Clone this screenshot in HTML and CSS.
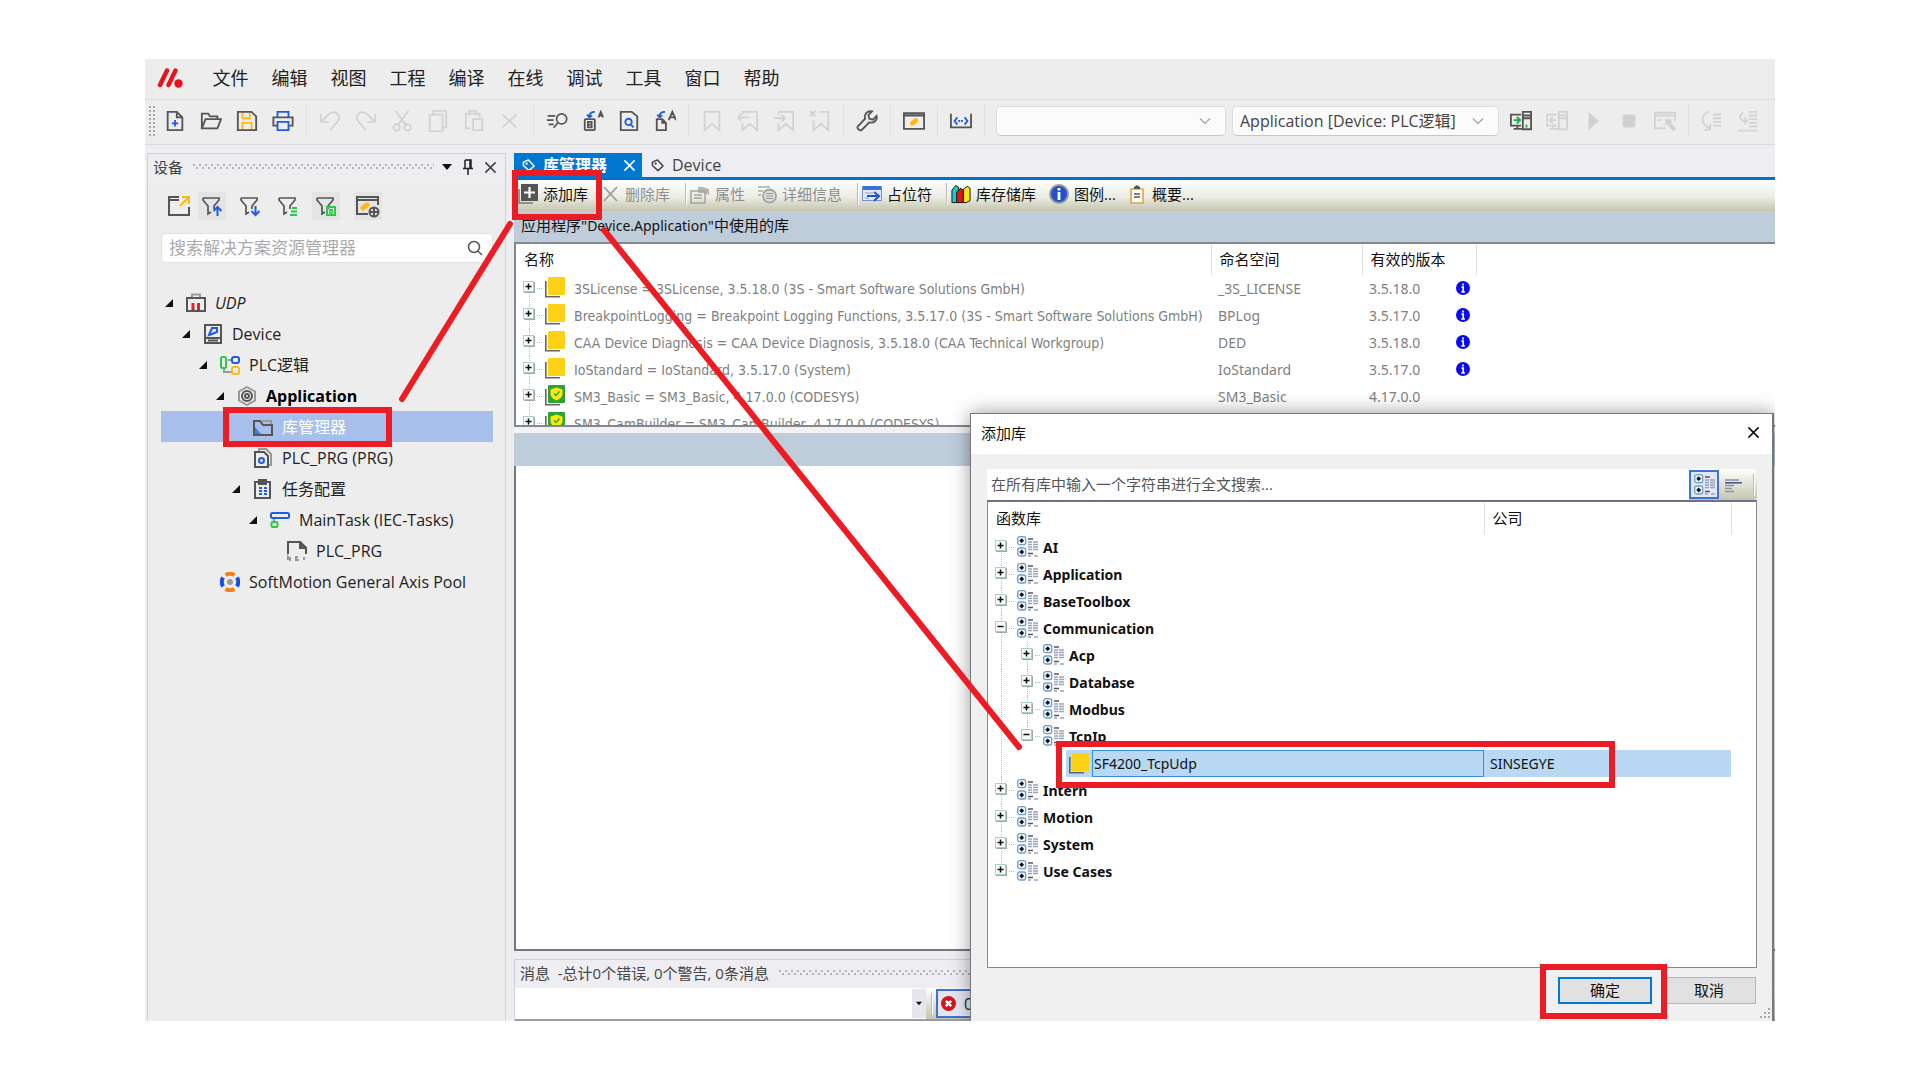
FILE: index.html
```html
<!DOCTYPE html>
<html lang="zh-CN">
<head>
<meta charset="utf-8">
<title>库管理器</title>
<link rel="stylesheet" href="styles.css">
</head>
<body>
<svg class="defs" aria-hidden="true">
  <symbol id="i-plus" viewBox="0 0 12 12"><rect x="1" y="1" width="11" height="11" fill="#9aa9a9"/><rect x=".5" y=".5" width="10" height="10" fill="#f6faf8" stroke="#a9cfcb"/><path d="M2.5 5.5h6M5.500 2.500v6" stroke="#111" stroke-width="1.500"/></symbol>
  <symbol id="i-minus" viewBox="0 0 12 12"><rect x="1" y="1" width="11" height="11" fill="#9aa9a9"/><rect x=".5" y=".5" width="10" height="10" fill="#f6faf8" stroke="#a9cfcb"/><path d="M2.500 5.500h6" stroke="#111" stroke-width="1.500"/></symbol>
  <symbol id="i-lib" viewBox="0 0 20 21"><path d="M.8 4v15.800H15" fill="none" stroke="#666" stroke-width="1.600"/><rect x="3" y="0" width="17" height="18" rx="1" fill="#fcd116"/></symbol>
  <symbol id="i-safe" viewBox="0 0 20 21"><path d="M.8 4v15.800H15" fill="none" stroke="#666" stroke-width="1.600"/><rect x="3" y="0" width="17" height="18" rx="1" fill="#2fa336"/><path d="M11.500 2.500l6 2v4.500c0 3-3 5.200-6 6.500-3-1.300-6-3.500-6-6.500V4.500z" fill="#fbe80f"/><path d="M9 8.500l2 2 3.500-4" fill="none" stroke="#2fa336" stroke-width="1.300"/></symbol>
  <symbol id="i-cat" viewBox="0 0 21 21"><g fill="#eef4fb" stroke="#6f9fd0" stroke-width="1.300"><rect x=".7" y=".7" width="8" height="8" rx="2"/><rect x=".7" y="12" width="8" height="8" rx="2"/></g><path d="M4.700 2.300l2.400 2.400-2.400 2.400-2.400-2.400zM4.700 13.600l2.400 2.400-2.400 2.400-2.400-2.400z" fill="#111"/><path d="M11 3h5M11 17.500h5" stroke="#555" stroke-width="1.300"/><path d="M11 6h4m1 0h5M11 8.500h4m1 0h5M11 11h4m1 0h5M11 13.500h4m1 0h5M17 20h4M11 20h3" stroke="#98a2bb" stroke-width="1.300"/></symbol>
  <symbol id="i-info" viewBox="0 0 14 14"><circle cx="7" cy="7" r="7" fill="#0a0af0"/><path d="M7 2.500v2M5.500 6.200H7.200v4.800M5.300 11h3.600" stroke="#fff" stroke-width="1.700" fill="none"/></symbol>
  <symbol id="i-tag" viewBox="0 0 14 14"><path d="M1.500 3.500L7 1l6 6.500L7.500 12.500 1.500 7z" fill="none" stroke="currentColor" stroke-width="1.600" stroke-linejoin="round"/><circle cx="5" cy="5" r="1.200" fill="currentColor"/></symbol>
  <symbol id="i-x" viewBox="0 0 14 14"><path d="M1.500 1.500l11 11M12.500 1.500l-11 11" stroke="currentColor" stroke-width="1.700"/></symbol>
  <symbol id="i-open" viewBox="0 0 10 10"><path d="M9 1v8H1z" fill="#111"/></symbol>
  <symbol id="i-down" viewBox="0 0 12 8"><path d="M1 1.500l5 5 5-5" fill="none" stroke="#aaa" stroke-width="1.400"/></symbol>
  <symbol id="i-caret" viewBox="0 0 10 6"><path d="M0 0h10L5 6z" fill="#111"/></symbol>
  <symbol id="i-funnel" viewBox="0 0 24 24"><path d="M3 4h16v2l-5 6v3M3 4v2l5 6v8l3-2" fill="none" stroke="#555" stroke-width="1.700"/></symbol>
</svg>
<div class="app">
  <nav class="menubar" aria-label="主菜单">
    <svg class="logo" viewBox="0 0 26 20"><path d="M3 17L10 2.500M11.500 17l7-14.500" stroke="#e8131c" stroke-width="4.400" stroke-linecap="round"/><circle cx="21.500" cy="15.500" r="4.200" fill="#e8131c"/></svg>
    <button>文件</button><button>编辑</button><button>视图</button><button>工程</button><button>编译</button><button>在线</button><button>调试</button><button>工具</button><button>窗口</button><button>帮助</button>
  </nav>
  <div class="toolbar" role="toolbar" aria-label="标准">
    <span class="grip"></span>
    <button aria-label="新建"><svg viewBox="0 0 24 24"><path d="M4 2h10l6 6v14H4zM14 2v6h6"/><path class="b" d="M12 11v7M8.500 14.500h7"/></svg></button>
    <button aria-label="打开"><svg viewBox="0 0 24 24"><path d="M2 20V4h7l2 3h8v3M2 20l4-10h17l-4 10z"/></svg></button>
    <button aria-label="保存"><svg viewBox="0 0 24 24"><path class="y" d="M7 2v7h8V2M7 22v-8h10v8"/><path d="M2 2h15l5 5v15H2z"/></svg></button>
    <button aria-label="打印"><svg viewBox="0 0 24 24"><path d="M6 17H1.500V8h21v9H18"/><path class="b" d="M6 8V2h12v6M6 13h12v9H6z"/></svg></button>
    <span class="sep"></span>
    <button disabled aria-label="撤消"><svg viewBox="0 0 24 24"><path d="M2 4v9h9M3 12l7-7c7-6 16 1 10 8l-8 9"/></svg></button>
    <button disabled aria-label="重做"><svg viewBox="0 0 24 24"><path d="M22 4v9h-9M21 12l-7-7C7-1-2 6 4 13l8 9"/></svg></button>
    <button disabled aria-label="剪切"><svg viewBox="0 0 24 24"><path d="M5 1l11 15M19 1L8 16"/><circle cx="6" cy="19" r="3.500"/><circle cx="18" cy="19" r="3.500"/></svg></button>
    <button disabled aria-label="复制"><svg viewBox="0 0 24 24"><path d="M7 5V1h14v18h-4M3 5h14v18H3z"/></svg></button>
    <button disabled aria-label="粘贴"><svg viewBox="0 0 24 24"><path d="M8 20H3V4h15v4M7 6V1h7v5M11 10h10v12H11z"/></svg></button>
    <button disabled aria-label="删除"><svg viewBox="0 0 24 24"><path d="M4 5l15 14M19 5L4 19"/></svg></button>
    <span class="sep"></span>
    <button aria-label="查找"><svg viewBox="0 0 26 24"><circle cx="18.500" cy="9.500" r="6"/><path d="M14 14l-5 6M2 6h9M1 11h8M3 16h6"/></svg></button>
    <button aria-label="替换"><svg viewBox="0 0 24 24"><rect x="3" y="10" width="11" height="12" rx="1"/><path d="M6.500 13h4v6h-4zM6.500 16h4M18 8l2.500-6L23 8M19 6h3"/><path class="b" d="M8 7c0-3 2-5 6-5M5.500 5L8 8l3-2"/></svg></button>
    <button aria-label="在文件中查找"><svg viewBox="0 0 24 24"><path d="M3 2h12l6 5v15H3z"/><circle class="b" cx="11.500" cy="13" r="3.500"/><path class="b" d="M14 16l3 3"/></svg></button>
    <button aria-label="在文件中替换"><svg viewBox="0 0 24 24"><path d="M3 10h6l4 4v8H3zM9 10v4h4M16 11l4-9 4 9M17.500 8h5"/><path class="b" d="M6 7c0-3 2-5 6-5M3.500 5L6 8l3-2"/></svg></button>
    <span class="sep"></span>
    <button disabled aria-label="书签"><svg viewBox="0 0 24 24"><path d="M4 2h16v20l-8-7-8 7z"/></svg></button>
    <button disabled aria-label="上一书签"><svg viewBox="0 0 24 24"><path d="M6 5V2h16v20l-8-7-8 7v-8M13 8H1m4-4L1 8l4 4"/></svg></button>
    <button disabled aria-label="下一书签"><svg viewBox="0 0 24 24"><path d="M6 5V2h16v20l-8-7-8 7v-8M1 9h12M9 5l4 4-4 4"/></svg></button>
    <button disabled aria-label="清除书签"><svg viewBox="0 0 24 24"><path d="M11 2h10v20l-8-7-8 7V11M1 1l6 6M7 1L1 7"/></svg></button>
    <span class="sep"></span>
    <button aria-label="编译"><svg viewBox="0 0 24 24"><path d="M22.500 6.500l-4 4-4-1-1-4 4-4c-5-1-9 3-7.500 8L1.800 18c-1 2 2 5 4.200 4l8.500-8.500c5 1.500 9-2.500 8-7z"/></svg></button>
    <span class="sep"></span>
    <button aria-label="窗口"><svg viewBox="0 0 24 24"><path d="M1 3.500h22v17H1zM1 6h22"/><path class="pill" d="M10 14.500l4-3"/></svg></button>
    <span class="sep"></span>
    <button aria-label="范围"><svg viewBox="0 0 24 24"><path d="M1 4v15h22V4"/><path class="b" d="M8 8l-3 4 3 4M16 8l3 4-3 4M9 12h2m1 0h2"/></svg></button>
    <span class="sep"></span>
    <label class="combo combo-find"><select aria-label="查找文本"><option></option></select><svg><use href="#i-down"/></svg></label>
    <label class="combo combo-app"><select aria-label="活动应用"><option>Application [Device: PLC逻辑]</option></select><svg><use href="#i-down"/></svg></label>
    <button aria-label="登录"><svg viewBox="0 0 24 24"><path d="M12 5H1v12h11M4 20.500h9M8 17v3M14 2h9v19h-9zM15 6h7M15 9h7"/><path class="go" d="M4 11h6M7.500 7.500L11 11l-3.500 3.500M18 16v3"/></svg></button>
    <button disabled aria-label="退出"><svg viewBox="0 0 24 24"><path d="M12 5H1v12h11M4 20.500h9M8 17v3M14 2h9v19h-9zM15 6h7M15 9h7M11 11H4M7.500 7.500L4 11l3.500 3.500"/></svg></button>
    <button disabled aria-label="启动"><svg viewBox="0 0 24 24"><path class="f" d="M8 4l9 8-9 8z"/></svg></button>
    <button disabled aria-label="停止"><svg viewBox="0 0 24 24"><rect class="f" x="6" y="6" width="12" height="12" rx="1"/></svg></button>
    <button disabled aria-label="选项"><svg viewBox="0 0 24 24"><path d="M13 20H1V3h22v9M1 6h22M4 11h3"/><path class="f" d="M13 11h5v4h-5zM17 14l6 6-2 2-6-7z"/></svg></button>
    <span class="sep"></span>
    <button disabled aria-label="跳过"><svg viewBox="0 0 24 24"><path d="M9 2C2 3 0 10 3 15l6 5M4 22l6-1V15M13 5h9M13 9h9M13 13h9M13 17h9"/></svg></button>
    <button disabled aria-label="跳入"><svg viewBox="0 0 24 24"><path d="M7 3c-5 2-5 8 1 9h3M8 8l3 4-3 3M13 2h9M13 6h9M13 10h9M13 14h9M13 18h9M1 22.500h21"/></svg></button>
  </div>

  <main class="work">
    <aside class="devices">
      <header class="pane-head"><h2>设备</h2><span class="dots"></span><svg class="caret"><use href="#i-caret"/></svg><svg class="pin" viewBox="0 0 12 16"><path d="M3 1h6v8M3 1v8M8 1v8M1 9.500h10M6 9.500V16" fill="none" stroke="#222" stroke-width="1.500"/></svg><svg class="close"><use href="#i-x"/></svg></header>
      <div class="filters">
        <button aria-label="展开"><svg viewBox="0 0 24 24"><path d="M12 3H2v18h20v-8M2 6h10"/><path class="y" d="M13 12l9-9M15 3h7v7"/></svg></button>
        <button class="on" aria-label="筛选一"><svg viewBox="0 0 24 24"><use href="#i-funnel"/><path class="b" d="M17.500 22v-9M13.500 17l4-4 4 4"/></svg></button>
        <button aria-label="筛选二"><svg viewBox="0 0 24 24"><use href="#i-funnel"/><path class="b" d="M17.500 12v9M13.500 17l4 4 4-4"/></svg></button>
        <button aria-label="筛选三"><svg viewBox="0 0 24 24"><use href="#i-funnel"/><path class="g" d="M16 14h5M15 17.500h6M14 21h7"/></svg></button>
        <button class="on" aria-label="筛选四"><svg viewBox="0 0 24 24"><use href="#i-funnel"/><path class="g" d="M13 13h8v8h-8zM15 16h4M15 18.500h4"/></svg></button>
        <button class="on" aria-label="视图设置"><svg viewBox="0 0 24 24"><path d="M12 20H1V3h21v8M1 6h21"/><path class="pill" d="M7 14l4-3"/><circle cx="18" cy="18" r="4.500"/><path d="M14 18h8M18 14v8"/></svg></button>
      </div>
      <label class="search"><input type="text" placeholder="搜索解决方案资源管理器" aria-label="搜索"><svg viewBox="0 0 16 16"><circle cx="7" cy="7" r="5.500" fill="none" stroke="#555" stroke-width="1.500"/><path d="M11 11l4 4" stroke="#555" stroke-width="1.500"/></svg></label>
      <ul class="tree">
        <li class="l0"><svg class="ar"><use href="#i-open"/></svg><svg class="ic" viewBox="0 0 20 20"><path d="M1 5h18v13H1z"/><path class="mute" d="M6 4V1.500h8V4"/><path class="r" d="M7 17v-7M12.500 17v-7"/></svg><i>UDP</i></li>
        <li class="l1"><svg class="ar"><use href="#i-open"/></svg><svg class="ic" viewBox="0 0 20 20"><path d="M2 1h16v18H2zM2 14h16M5 16.500h10"/><path class="b" d="M6 11l3-7h5v4l-5 2z"/></svg><span>Device</span></li>
        <li class="l2"><svg class="ar"><use href="#i-open"/></svg><svg class="ic" viewBox="0 0 20 20"><path class="mute" d="M4 13v4h9M8 5h5"/><rect class="g" x="1" y="2" width="5" height="11" rx="1.500"/><rect class="b" x="12" y="2" width="7" height="6" rx="2"/><rect class="y" x="12" y="12" width="7" height="7" rx="2"/></svg><span>PLC逻辑</span></li>
        <li class="l3"><svg class="ar"><use href="#i-open"/></svg><svg class="ic" viewBox="0 0 20 20"><path class="mute" d="M10 1l8 4.500v9L10 19l-8-4.500v-9z"/><circle cx="10" cy="10" r="5"/><circle cx="10" cy="10" r="2"/></svg><b>Application</b></li>
        <li class="l4 sel"><span class="ar"></span><svg class="ic" viewBox="0 0 20 20"><path class="mute" d="M9 4h9v3"/><path class="corner" d="M2 10l6 7H2z"/><path d="M1 18V4h6l3 4h9v10z"/></svg><span>库管理器</span></li>
        <li class="l4"><span class="ar"></span><svg class="ic" viewBox="0 0 20 20"><path class="mute" d="M6 3V1h7l5 5v11h-2"/><path d="M2 4h9l4 4v11H2z"/><circle class="b" cx="8.500" cy="12.500" r="2.500"/></svg><span>PLC_PRG (PRG)</span></li>
        <li class="l4"><svg class="ar"><use href="#i-open"/></svg><svg class="ic" viewBox="0 0 20 20"><path d="M2 3h15v16H2zM6 1h7v4H6z"/><path class="b" d="M6 9h3m2 0h3M6 12h3m2 0h3M6 15h3m2 0h3"/></svg><span>任务配置</span></li>
        <li class="l5"><svg class="ar"><use href="#i-open"/></svg><svg class="ic" viewBox="0 0 20 20"><path class="mute" d="M4 9v4"/><rect class="b" x="1" y="3" width="18" height="5" rx="1.500"/><rect class="g" x="1.500" y="12" width="6" height="5" rx="1.500"/></svg><span>MainTask (IEC-Tasks)</span></li>
        <li class="l6"><span class="ar"></span><svg class="ic" viewBox="0 0 20 20"><path d="M1 13V1h12l6 6v6"/><path class="solid" d="M13 1v6h6z"/><path class="mute" d="M1 19v-3l2 3v-3M11 16H9v3h2v-1M17 16v3"/></svg><span>PLC_PRG</span></li>
        <li class="l2"><span class="ar"></span><svg class="ic" viewBox="0 0 20 20"><path class="arc-o" d="M5.500 3q4.500-2.500 9 0M5.500 17q4.500 2.500 9 0"/><path class="arc-b" d="M3 5.500q-2.500 4.500 0 9M17 5.500q2.500 4.500 0 9"/><circle class="dot" cx="10" cy="10" r="3"/></svg><span>SoftMotion General Axis Pool</span></li>
      </ul>
    </aside>

    <section class="docs">
      <div class="tabs">
        <button class="tab active"><svg class="tag"><use href="#i-tag"/></svg><span>库管理器</span><svg class="close"><use href="#i-x"/></svg></button>
        <button class="tab"><svg class="tag"><use href="#i-tag"/></svg><span>Device</span></button>
      </div>
      <div class="libbar" role="toolbar" aria-label="库">
        <button class="w-add"><svg viewBox="0 0 20 20"><path d="M1 5v14h14" fill="none" stroke="#777" stroke-width="1.500"/><rect x="3" width="17" height="17" fill="#555"/><path d="M11.500 3v11M6 8.500h11" stroke="#fff" stroke-width="2.200"/></svg>添加库</button>
        <button class="w-del" disabled><svg viewBox="0 0 20 20"><path d="M4 3l13 14M17 3L4 17" stroke="#999" stroke-width="1.600"/></svg>删除库</button>
        <span class="bar"></span>
        <button class="w-prop" disabled><svg viewBox="0 0 20 20"><path d="M8 3h5l6 2v6l-6-2H8z" fill="#b5b5b5"/><path d="M1 7h14v12H1zM4 11h8M4 14h8" fill="none" stroke="#a5a5a5" stroke-width="1.600"/></svg>属性</button>
        <button class="w-det" disabled><svg viewBox="0 0 20 20"><path d="M1 3h12M1 7h5M1 11h3" stroke="#aaa" stroke-width="1.500"/><circle cx="12.500" cy="12" r="6.500" fill="#ddd" stroke="#a5a5a5" stroke-width="1.800"/><path d="M9 9.500h7M9 12h7M9 14.500h7" stroke="#999"/></svg>详细信息</button>
        <span class="bar"></span>
        <button class="w-ph"><svg viewBox="0 0 20 20"><rect x=".5" y="2.500" width="19" height="14" fill="#dfe9fb" stroke="#7690c8"/><rect x="1" y="2" width="18" height="4" fill="#3c6fd8"/><path d="M3 9h8M3 14h4" stroke="#8aa"/><path d="M5 12h10M12 8l5 4-5 5" fill="none" stroke="#1d55c7" stroke-width="2"/></svg>占位符</button>
        <span class="bar"></span>
        <button class="w-rep"><svg viewBox="0 0 21 20"><g stroke="#111"><path d="M1 6l4-5 3 2v16H1z" fill="#1cc8c8"/><path d="M6 8l4-4 3 2v13H6z" fill="#e11515"/><path d="M13 5l4-3 3 2v13l-4 2h-3z" fill="#f5e51b"/></g></svg>库存储库</button>
        <button class="w-leg"><svg viewBox="0 0 20 20"><circle cx="10" cy="10" r="9" fill="#2350cc" stroke="#999" stroke-width="2"/><path d="M10 4v2.500M10 8v8" stroke="#fff" stroke-width="2.800"/></svg>图例...</button>
        <button class="w-sum"><svg viewBox="0 0 20 20"><path d="M4 5h12v14H4z" fill="#fff" stroke="#dba640" stroke-width="1.600"/><path d="M7 5V3l3-2 3 2v2z" fill="#555"/><path d="M7 10h6M7 13h6" stroke="#555" stroke-width="1.300"/></svg>概要...</button>
      </div>
      <h1 class="scope">应用程序"<span class="lat">Device.Application</span>"中使用的库</h1>
      <div class="liblist">
        <table>
          <colgroup><col class="c-name"><col class="c-ns"><col class="c-ver"><col></colgroup>
          <thead><tr><th>名称</th><th>命名空间</th><th>有效的版本</th><th class="end"></th></tr></thead>
          <tbody>
            <tr><td><div class="node"><svg class="ex"><use href="#i-plus"/></svg><svg class="li"><use href="#i-lib"/></svg><span class="libname">3SLicense = 3SLicense, 3.5.18.0 (3S - Smart Software Solutions GmbH)</span></div></td><td>_3S_LICENSE</td><td>3.5.18.0<svg class="nf"><use href="#i-info"/></svg></td><td></td></tr>
            <tr><td><div class="node"><svg class="ex"><use href="#i-plus"/></svg><svg class="li"><use href="#i-lib"/></svg><span class="libname">BreakpointLogging = Breakpoint Logging Functions, 3.5.17.0 (3S - Smart Software Solutions GmbH)</span></div></td><td>BPLog</td><td>3.5.17.0<svg class="nf"><use href="#i-info"/></svg></td><td></td></tr>
            <tr><td><div class="node"><svg class="ex"><use href="#i-plus"/></svg><svg class="li"><use href="#i-lib"/></svg><span class="libname">CAA Device Diagnosis = CAA Device Diagnosis, 3.5.18.0 (CAA Technical Workgroup)</span></div></td><td>DED</td><td>3.5.18.0<svg class="nf"><use href="#i-info"/></svg></td><td></td></tr>
            <tr><td><div class="node"><svg class="ex"><use href="#i-plus"/></svg><svg class="li"><use href="#i-lib"/></svg><span class="libname">IoStandard = IoStandard, 3.5.17.0 (System)</span></div></td><td>IoStandard</td><td>3.5.17.0<svg class="nf"><use href="#i-info"/></svg></td><td></td></tr>
            <tr><td><div class="node"><svg class="ex"><use href="#i-plus"/></svg><svg class="li"><use href="#i-safe"/></svg><span class="libname">SM3_Basic = SM3_Basic, 4.17.0.0 (CODESYS)</span></div></td><td>SM3_Basic</td><td>4.17.0.0</td><td></td></tr>
            <tr><td><div class="node"><svg class="ex"><use href="#i-plus"/></svg><svg class="li"><use href="#i-safe"/></svg><span class="libname">SM3_CamBuilder = SM3_CamBuilder, 4.17.0.0 (CODESYS)</span></div></td><td></td><td></td><td></td></tr>
          </tbody>
        </table>
      </div>
      <div class="splitter"></div>
      <div class="subhead"></div>
      <div class="blank"></div>
      <section class="messages">
        <header class="pane-head"><h2>消息&nbsp; -总计0个错误, 0个警告, 0条消息</h2><span class="dots"></span></header>
        <div class="msgbar">
          <label class="msgsel"><select aria-label="消息类别"><option></option></select><svg><use href="#i-caret"/></svg></label>
          <span class="bar"></span>
          <button><svg viewBox="0 0 14 14"><circle cx="7" cy="7" r="7" fill="#d8131b"/><path d="M4.500 4.500l5 5M9.500 4.500l-5 5" stroke="#fff" stroke-width="2.200"/></svg>0</button>
        </div>
      </section>
    </section>
  </main>

  <div class="dialog" role="dialog" aria-label="添加库">
    <header><h2>添加库</h2><button aria-label="关闭"><svg class="close"><use href="#i-x"/></svg></button></header>
    <div class="dlg-body">
      <div class="finder"><input type="text" placeholder="在所有库中输入一个字符串进行全文搜索..." aria-label="全文搜索">
        <button class="on" aria-label="按类别"><svg><use href="#i-cat"/></svg></button>
        <button aria-label="列表"><svg viewBox="0 0 21 21"><path d="M1 6h14M1 11.500h9M1 14.500h7M1 17.500h9" stroke="#8a94a6" stroke-width="1.600"/><path d="M1 8.800h17" stroke="#4a5c86" stroke-width="1.600"/></svg></button>
        <span class="bar"></span></div>
      <div class="catalog">
        <table>
          <colgroup><col class="d-name"><col class="d-co"><col></colgroup>
          <thead><tr><th>函数库</th><th>公司</th><th class="end"></th></tr></thead>
          <tbody>
            <tr><td><div class="node"><svg class="ex"><use href="#i-plus"/></svg><svg class="ct"><use href="#i-cat"/></svg>AI</div></td><td></td><td></td></tr>
            <tr><td><div class="node"><svg class="ex"><use href="#i-plus"/></svg><svg class="ct"><use href="#i-cat"/></svg>Application</div></td><td></td><td></td></tr>
            <tr><td><div class="node"><svg class="ex"><use href="#i-plus"/></svg><svg class="ct"><use href="#i-cat"/></svg>BaseToolbox</div></td><td></td><td></td></tr>
            <tr><td><div class="node"><svg class="ex"><use href="#i-minus"/></svg><svg class="ct"><use href="#i-cat"/></svg>Communication</div></td><td></td><td></td></tr>
            <tr class="n1"><td><div class="node"><svg class="ex"><use href="#i-plus"/></svg><svg class="ct"><use href="#i-cat"/></svg>Acp</div></td><td></td><td></td></tr>
            <tr class="n1"><td><div class="node"><svg class="ex"><use href="#i-plus"/></svg><svg class="ct"><use href="#i-cat"/></svg>Database</div></td><td></td><td></td></tr>
            <tr class="n1"><td><div class="node"><svg class="ex"><use href="#i-plus"/></svg><svg class="ct"><use href="#i-cat"/></svg>Modbus</div></td><td></td><td></td></tr>
            <tr class="n1 last"><td><div class="node"><svg class="ex"><use href="#i-minus"/></svg><svg class="ct"><use href="#i-cat"/></svg>TcpIp</div></td><td></td><td></td></tr>
            <tr class="pick"><td><div class="picked"><svg class="li"><use href="#i-lib"/></svg><span>SF4200_TcpUdp</span></div></td><td>SINSEGYE</td><td></td></tr>
            <tr><td><div class="node"><svg class="ex"><use href="#i-plus"/></svg><svg class="ct"><use href="#i-cat"/></svg>Intern</div></td><td></td><td></td></tr>
            <tr><td><div class="node"><svg class="ex"><use href="#i-plus"/></svg><svg class="ct"><use href="#i-cat"/></svg>Motion</div></td><td></td><td></td></tr>
            <tr><td><div class="node"><svg class="ex"><use href="#i-plus"/></svg><svg class="ct"><use href="#i-cat"/></svg>System</div></td><td></td><td></td></tr>
            <tr class="last"><td><div class="node"><svg class="ex"><use href="#i-plus"/></svg><svg class="ct"><use href="#i-cat"/></svg>Use Cases</div></td><td></td><td></td></tr>
          </tbody>
        </table>
      </div>
      <footer><button class="ok">确定</button><button>取消</button></footer>
    </div>
    <svg class="resize" viewBox="0 0 12 12"><path d="M9 1h2M5 5h2m2 0h2M1 9h2m2 0h2m2 0h2" stroke="#aaa" stroke-width="2"/></svg>
  </div>

  <svg class="marks" aria-hidden="true">
    <rect x="370" y="114" width="84" height="44"/>
    <rect x="81" y="351" width="163" height="34"/>
    <rect x="914" y="685" width="553" height="41"/>
    <rect x="1398" y="908" width="121" height="49"/>
    <path d="M365 165L257 340M459 171l415 517"/>
  </svg>
</div>
</body>
</html>
```
FILE: styles.css
```css
* { box-sizing: border-box; }
body {
  margin: 0;
  min-height: 100vh;
  padding: 59px 145px;
  display: flex;
  background: #fff;
  color: #222;
  font: 16px/20px "Open Sans", "Noto Sans CJK SC", sans-serif;
}
button, input, select { font: inherit; color: inherit; border: 0; padding: 0; margin: 0; background: none; border-radius: 0; }
h1, h2 { margin: 0; font-weight: 400; }
svg { flex: none; }
.defs { position: absolute; width: 0; height: 0; }
.app { position: relative; flex: 1; min-width: 0; display: flex; flex-direction: column; background: #eeedf2; overflow: hidden; }

.menubar { display: flex; align-items: center; height: 41px; padding: 0 0 2px 12px; background: #ededed; border-bottom: 1px solid #d9d9d9; font-size: 18px; }
.menubar .logo { width: 26px; height: 20px; margin-right: 18px; }
.menubar button { padding: 0 11px; width: 59px; white-space: nowrap; }

.toolbar { display: flex; align-items: center; height: 45px; padding: 0 0 2px 4px; background: #ededed; border-bottom: 1px solid #d9d9d9; }
.toolbar button { flex: none; width: 36px; height: 32px; display: flex; align-items: center; justify-content: center; }
.toolbar button svg { width: 22px; height: 22px; }
.toolbar path, .toolbar circle, .toolbar rect, .filters path, .filters circle, .ic path, .ic circle, .ic rect { fill: none; stroke: #555; stroke-width: 2; }
.toolbar button:disabled :is(path, circle, rect) { stroke: #d3d3d3; }
.toolbar button:disabled .f { fill: #cfcfcf; }
.toolbar .b, .filters .b, .ic .b { stroke: #1f5de0; }
.toolbar .y, .filters .y, .ic .y { stroke: #fdbb11; }
.filters .g, .ic .g { stroke: #2fc548; }
.toolbar .go { stroke: #14ac35; }
.ic .r { stroke: #e3232e; stroke-width: 3; }
.ic .mute { stroke: #999; }
.ic .solid { fill: #555; }
.ic .corner { fill: #3f7be8; stroke: none; }
.ic .arc-o { stroke: #f97d10; stroke-width: 4; }
.ic .arc-b { stroke: #1450e8; stroke-width: 4; }
.ic .dot { fill: #999; stroke: none; }
.toolbar .pill, .filters .pill { stroke: #fdbb11; stroke-width: 5; stroke-linecap: round; }
.grip { width: 8px; height: 30px; background: radial-gradient(circle at 1px 1px, #aaa 1px, transparent 1px) 0 0 / 4px 4px; }
.sep { flex: none; width: 1px; height: 32px; margin: 0 5px; background: #e0e0e0; }
.combo { flex: none; display: flex; align-items: center; height: 30px; padding: 0 14px 0 7px; border: 1px solid #dedede; border-bottom-color: #c6c6c6; border-radius: 5px; background: #fbfbfb; color: #444; }
.combo select { flex: 1; min-width: 0; appearance: none; outline: 0; }
.combo svg { width: 12px; height: 8px; }
.combo-find { width: 230px; margin: 0 6px; }
.combo-app { width: 267px; margin-right: 4px; }

.work { flex: 1; display: flex; gap: 8px; padding: 8px 0 0 2px; min-height: 0; }
.devices { flex: none; width: 359px; border: 1px solid #cdd0de; border-width: 1px 1px 0; background: #ededed; }
.pane-head { display: flex; align-items: center; height: 28px; padding: 0 8px 2px 5px; background: #eeedf2; color: #444; font-size: 15px; }
.pane-head h2 { font-size: 15px; }
.dots { flex: 1; height: 6px; margin: 0 8px 0 10px; background: radial-gradient(circle at 1px 1px, #b5b5b5 1px, transparent 1px) 0 0 / 6px 6px, radial-gradient(circle at 4px 4px, #b5b5b5 1px, transparent 1px) 0 0 / 6px 6px; }
.caret { width: 10px; height: 6px; }
.pin { width: 12px; height: 16px; margin: 0 10px; }
.close { width: 13px; height: 13px; }
.filters { display: flex; gap: 10px; padding: 10px 0 0 17px; }
.filters button { width: 28px; height: 28px; display: flex; align-items: center; justify-content: center; }
.filters button svg { width: 24px; height: 24px; }
.filters .on { background: #e4e4e4; }
.filters button:first-child { margin-right: -5px; }
.filters button:last-child { margin-left: 4px; }
.search { display: flex; align-items: center; height: 30px; margin: 13px 12px 0 13px; padding: 0 9px 0 7px; border: 1px solid #e0e0e6; border-radius: 5px; background: #fff; font-size: 17px; }
.search input { flex: 1; min-width: 0; outline: 0; }
.search input::placeholder { color: #aaa; opacity: 1; }
.search svg { width: 16px; height: 16px; }
.tree { list-style: none; margin: 24px 12px 0 13px; padding: 0; }
.tree li { display: flex; align-items: center; height: 31px; padding-left: 3px; white-space: nowrap; }
.tree .ar { flex: none; width: 10px; height: 10px; margin-right: 12px; }
.tree .ic { width: 20px; height: 20px; margin-right: 9px; }
.tree .l1 { padding-left: 20px; }
.tree .l2 { padding-left: 37px; }
.tree .l3 { padding-left: 54px; color: #000; }
.tree .l4 { padding-left: 70px; }
.tree .l5 { padding-left: 87px; }
.tree .l6 { padding-left: 104px; }
.tree .sel { background: #a8beeb; color: #fff; }

.docs { flex: 1; min-width: 0; display: flex; flex-direction: column; }
.tabs { display: flex; border-bottom: 3px solid #0071ce; height: 27px; }
.tab { display: flex; align-items: center; height: 24px; padding-left: 9px; color: #444; }
.tab .tag { width: 13px; height: 13px; margin-right: 8px; }
.tab.active { width: 128px; padding: 0 6px 0 8px; background: #0078d0; color: #fff; font-weight: 700; }
.tab.active .close { margin-left: auto; }
.libbar { display: flex; align-items: center; height: 31px; padding: 0 4px 3px; background: linear-gradient(#fff, #ecece4 55%, #c5c5ae); font-size: 15px; color: #111; }
.libbar button { flex: none; display: flex; align-items: center; gap: 5px; height: 26px; white-space: nowrap; }
.libbar button svg { width: 20px; height: 20px; }
.libbar button:disabled { color: #8f8f8f; }
.w-add { width: 82px; }
.w-del { width: 83px; }
.w-prop { width: 67px; }
.w-det { width: 98px; }
.w-ph { width: 82px; }
.w-rep { width: 98px; }
.w-leg { width: 78px; }
.bar { flex: none; width: 2px; height: 22px; margin: 0 3px 0 2px; border-left: 1px solid #bbb; background: #fff; }
.scope { height: 31px; padding: 4px 7px; background: #bfcddb; color: #111; font: 15px/20px "Noto Sans", "Noto Sans CJK SC", sans-serif; }
.lat { font-size: 14px; }
.liblist { height: 185px; border: solid #828790; border-width: 2px 0 2px 2px; background: #fff; overflow: hidden; }
table { width: 100%; table-layout: fixed; border-collapse: collapse; font: 14px/20px "Noto Sans", "Noto Sans CJK SC", sans-serif; }
th, td { padding: 0 0 0 7px; text-align: left; font-weight: 400; white-space: nowrap; }
th { height: 31px; padding: 0 0 2px 8px; color: #111; font-size: 15px; border-left: 1px solid #e2e2e2; }
th:first-child { border-left: 0; }
td { height: 27px; color: #808080; }
.c-name { width: 695px; }
.c-ns { width: 151px; }
.c-ver { width: 114px; }
.libname { font: 14px/20px "DejaVu Sans Condensed", sans-serif; }
.node {
  display: flex;
  align-items: center;
  height: 27px;
  background:
    repeating-linear-gradient(#bbb 0 1px, transparent 1px 2px) 6px 0 / 1px 100% no-repeat,
    repeating-linear-gradient(90deg, #bbb 0 1px, transparent 1px 2px) 14px 13px / 6px 1px no-repeat;
}
tr:first-child .node { background-position: 6px 13px, 14px 13px; }
.last .node { background-size: 1px 13px, 6px 1px; }
.ex { width: 12px; height: 12px; margin-bottom: 3px; }
.node .li, .node .ct { margin-left: 10px; margin-bottom: 2px; }
.li { width: 20px; height: 21px; margin-right: 9px; }
.ct { width: 21px; height: 21px; margin-right: 5px; }
.nf { width: 14px; height: 14px; margin-left: 36px; vertical-align: -1px; }
.splitter { height: 6px; background: #f2f2f4; }
.subhead { height: 33px; background: #bfcddb; }
.blank { flex: 1; border: solid #75777f; border-width: 0 0 2px 2px; background: #fff; }
.messages { margin-top: 8px; border: 1px solid #cdd0de; border-width: 1px 0 0 1px; }
.msgbar { display: flex; align-items: center; height: 33px; background: linear-gradient(#fff, #c5c5ae); border-bottom: 2px solid #9a9da6; }
.msgsel { display: flex; align-items: center; width: 411px; height: 31px; background: #fff; }
.msgsel select { flex: 1; height: 29px; appearance: none; outline: 0; }
.msgsel svg { width: 14px; height: 29px; padding: 12px 4px; background: #e6e6ef; }
.msgbar .bar { margin: 0 3px 0 5px; }
.msgbar button { display: flex; align-items: center; gap: 8px; width: 90px; height: 29px; padding-left: 3px; border: 2px solid #3c74cf; background: #e4e6f0; }
.msgbar button svg { width: 15px; height: 15px; }

.dialog { position: absolute; top: 354px; right: 1px; bottom: 0; width: 804px; display: flex; flex-direction: column; border: solid #77787c; border-width: 1px 2px 0 1px; background: #f0f0f0; box-shadow: 0 0 18px rgba(0, 0, 0, .4); }
.dialog > header { display: flex; align-items: center; justify-content: space-between; height: 40px; padding: 0 12px 2px 10px; background: #fff; font-size: 15px; color: #111; }
.dialog > header h2 { font-size: 15px; }
.dlg-body { flex: 1; display: flex; flex-direction: column; padding: 15px 15px 17px 16px; min-height: 0; }
.finder { display: flex; align-items: center; height: 31px; background: linear-gradient(#fff, #c5c5ae); border-radius: 0 4px 4px 0; font-size: 15px; }
.finder input { flex: 1; height: 31px; padding: 0 0 2px 4px; outline: 0; background: #fff; }
.finder input::placeholder { color: #555; opacity: 1; }
.finder button { width: 30px; height: 29px; display: flex; align-items: center; justify-content: center; }
.finder .on { border: 2px solid #3c74cf; background: #e4e6f4; }
.finder button svg { width: 21px; height: 21px; }
.finder .bar { margin: 0 2px 0 4px; }
.catalog { flex: 1; border: 1px solid #828790; border-top: 2px solid #70708a; background: #fff; overflow: hidden; }
.catalog th { height: 32px; padding-bottom: 0; }
.catalog th, .catalog td { color: #111; }
.catalog td:first-child { padding-left: 7px; font-weight: 700; }
.catalog .n1 td:first-child { padding-left: 33px; }
.catalog :is(.n1, .pick) td:first-child { background: repeating-linear-gradient(#bbb 0 1px, transparent 1px 2px) 13px 0 / 1px 100% no-repeat; }
.d-name { width: 496px; }
.d-co { width: 247px; }
.catalog .pick td:first-child { padding-left: 78px; font-weight: 400; }
.catalog .pick td:nth-child(2) { background: #b8d8f3; padding-left: 6px; }
.picked { display: flex; align-items: center; height: 27px; background: #b8d8f3; padding-left: 3px; }
.picked .li { margin-right: 3px; }
.picked span { flex: 1; height: 27px; border: 1px solid #2f8ee0; line-height: 25px; padding-left: 1px; }
.dlg-body footer { display: flex; justify-content: flex-end; gap: 10px; padding: 9px 1px 0 0; }
.dlg-body footer button { width: 94px; height: 27px; padding-bottom: 1px; border: 1px solid #b4b4b4; background: #e1e1e1; font-size: 15px; color: #111; }
.dlg-body footer .ok { border: 2px solid #0078d7; }
.resize { position: absolute; right: 1px; bottom: 1px; width: 12px; height: 12px; }
.marks { position: absolute; inset: 0; width: 100%; height: 100%; pointer-events: none; fill: none; stroke: #ed1c24; stroke-width: 6; stroke-linecap: round; }
```
